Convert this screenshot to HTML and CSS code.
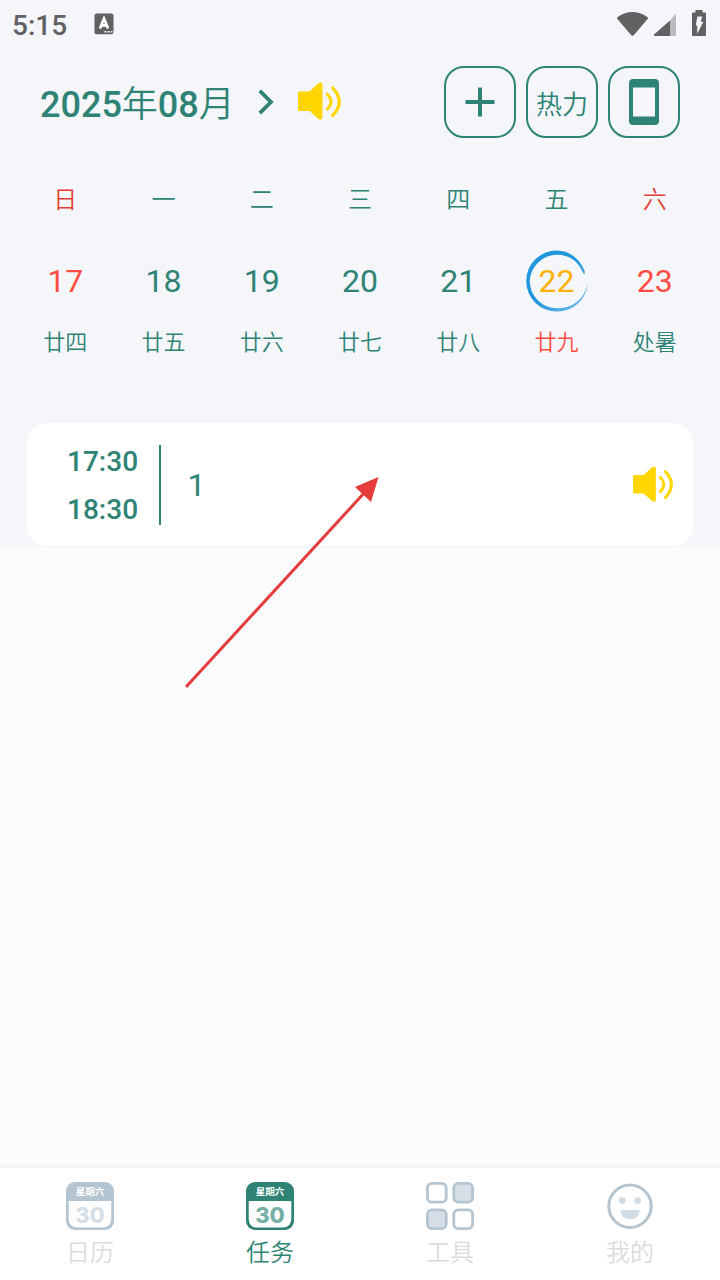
FILE: index.html
```html
<!DOCTYPE html>
<html lang="zh-CN">
<head>
<meta charset="utf-8">
<title>任务</title>
<link rel="stylesheet" href="styles.css">
</head>
<body>
<svg class="defs" width="0" height="0">
  <symbol id="speaker" viewBox="0 0 44 42">
    <path d="M1.5 11.5H11.5L20.5 3.3Q24.5 1.2 24.5 5V37Q24.5 41 20.5 38.9L11.5 31H1.5Q0 31 0 29.5V13Q0 11.5 1.5 11.5Z" fill="currentColor"/>
    <path d="M29.3 14.2Q36.8 21.6 29.3 29" fill="none" stroke="currentColor" stroke-width="3" stroke-linecap="round"/>
    <path d="M34.8 8Q47.6 21.6 34.8 35.4" fill="none" stroke="currentColor" stroke-width="3.2" stroke-linecap="round"/>
  </symbol>
  <symbol id="calendar" viewBox="0 0 48 48">
    <rect width="48" height="48" rx="9" fill="currentColor"/>
    <path d="M2.7 19H45.3V36.5Q45.3 45.6 36.5 45.6H11.5Q2.7 45.6 2.7 36.5Z" fill="#fff"/>
  </symbol>
</svg>
<div class="screen">
  <div class="top">
    <div class="status">
      <span class="clock">5:15</span>
      <svg class="keyboard" width="20" height="22" viewBox="0 0 20 22">
        <rect x=".5" y=".6" width="19" height="20.6" rx="2" fill="#616163"/>
        <path d="M6 15.5L10 5.5L14 15.5M7.4 12.4H12.6" fill="none" stroke="#fff" stroke-width="2.6"/>
        <path d="M10.5 18.8h2M13.7 18.8h2M16.9 18.8h1.6" stroke="#fff" stroke-width="1.6"/>
      </svg>
      <svg class="signals" width="92" height="28" viewBox="0 0 92 28">
        <path d="M2.4 7.2Q17.5-3 32.6 7.2Q33.6 8 32.6 9L18.7 25.3Q17.5 26.3 16.3 25.3L2.4 9Q1.4 8 2.4 7.2Z" fill="#616163"/>
        <path d="M55 10.5V26H39.7Q38.3 25.6 39.3 24.3Z" fill="#616163"/>
        <path d="M55 10.5L60 4.6Q61 3.8 61 5V25Q61 26 60 26H55Z" fill="#bababd"/>
        <path d="M81 0H87Q87.6 0 87.6 .7V2.6H90Q91 2.6 91 3.6V25Q91 26 90 26H78Q77 26 77 25V3.6Q77 2.6 78 2.6H80.4V.7Q80.4 0 81 0Z" fill="#616163"/>
        <path d="M82.4 6.4H87.2L85.8 11.8H88.4L82.2 23.8V15.5H80.7Z" fill="#f4f6fa"/>
      </svg>
    </div>
    <div class="header">
      <div class="month">2025<span>年</span>08<span>月</span></div>
      <svg class="chevron" width="16" height="26" viewBox="0 0 16 26"><path d="M1.8 1.8L13 13L1.8 24.2" fill="none" stroke="currentColor" stroke-width="3.8"/></svg>
      <svg class="sound" width="44" height="42"><use href="#speaker"/></svg>
      <div class="actions">
        <div class="action"><svg width="30" height="30" viewBox="0 0 30 30"><path d="M15 .5V29.5M.5 15H29.5" stroke="currentColor" stroke-width="4"/></svg></div>
        <div class="action">热力</div>
        <div class="action"><svg width="30" height="46" viewBox="0 0 30 46"><path fill="currentColor" fill-rule="evenodd" d="M4 0H26Q30 0 30 4V42Q30 46 26 46H4Q0 46 0 42V4Q0 0 4 0ZM4 8.5V37.5H26V8.5Z"/></svg></div>
      </div>
    </div>
    <div class="week">
      <div class="day"><span class="name rest">日</span><span class="num off">17</span><span class="lunar">廿四</span></div>
      <div class="day"><span class="name">一</span><span class="num">18</span><span class="lunar">廿五</span></div>
      <div class="day"><span class="name">二</span><span class="num">19</span><span class="lunar">廿六</span></div>
      <div class="day"><span class="name">三</span><span class="num">20</span><span class="lunar">廿七</span></div>
      <div class="day"><span class="name">四</span><span class="num">21</span><span class="lunar">廿八</span></div>
      <div class="day"><span class="name">五</span><span class="num today">22
        <svg class="ring" width="64" height="64" viewBox="0 0 64 64">
          <defs><linearGradient id="fade" x1="0" y1="0" x2="1" y2="1"><stop offset=".5" stop-color="#2196dc"/><stop offset="1" stop-color="#7cc0ea"/></linearGradient></defs>
          <path d="M59.3 25.5Q60.5 22 58.5 19.5A29.5 29.5 0 0 0 32 1.6A30.4 30.4 0 0 0 1.2 32A30.6 30.6 0 0 0 32 62.6A30.5 30.5 0 0 0 62.7 34A29.5 29.5 0 0 1 32 59.3A27.5 27.5 0 0 1 4.7 32A27.5 27.5 0 0 1 32 5.8C44 5.8 53 12 57.3 22.5Z" fill="url(#fade)"/>
        </svg></span><span class="lunar off">廿九</span></div>
      <div class="day"><span class="name rest">六</span><span class="num off">23</span><span class="lunar">处暑</span></div>
    </div>
    <div class="task">
      <div class="times"><span>17:30</span><span>18:30</span></div>
      <div class="title">1</div>
      <svg class="task-sound" width="41" height="40" viewBox="0 0 44 42" preserveAspectRatio="none"><use href="#speaker" width="44" height="42"/></svg>
    </div>
  </div>
  <div class="blank"></div>
  <div class="nav">
    <div class="tab">
      <div class="cal"><svg width="48" height="48"><use href="#calendar"/></svg><span class="cal-week">星期六</span><span class="cal-num">30</span></div>
      <span>日历</span>
    </div>
    <div class="tab active">
      <div class="cal"><svg width="48" height="48"><use href="#calendar"/></svg><span class="cal-week">星期六</span><span class="cal-num">30</span></div>
      <span>任务</span>
    </div>
    <div class="tab">
      <svg width="48" height="48" viewBox="0 0 48 48" stroke="#b4c5d1" stroke-width="2.8">
        <rect x="1.4" y="1.4" width="18.8" height="18.8" rx="4.5" fill="#fff"/>
        <rect x="27.8" y="1.4" width="18.8" height="18.8" rx="4.5" fill="#d5dee6"/>
        <rect x="1.4" y="27.8" width="18.8" height="18.8" rx="4.5" fill="#d5dee6"/>
        <rect x="27.8" y="27.8" width="18.8" height="18.8" rx="4.5" fill="#fff"/>
      </svg>
      <span>工具</span>
    </div>
    <div class="tab">
      <svg width="48" height="48" viewBox="0 0 48 48">
        <circle cx="24" cy="24.3" r="21.2" fill="none" stroke="#b4c5d1" stroke-width="3"/>
        <g fill="#d0dbe3"><circle cx="16.3" cy="18.6" r="3.4"/><circle cx="31.7" cy="18.6" r="3.4"/><path d="M14.2 28H33.8Q33 37.3 24 37.3T14.2 28Z"/></g>
      </svg>
      <span>我的</span>
    </div>
  </div>
  <svg class="arrow" width="200" height="220" viewBox="0 0 200 220">
    <path d="M6 217L186 21" stroke="#e53c3c" stroke-width="3"/>
    <path d="M198.5 7L175 17L191 32Z" fill="#e53c3c"/>
  </svg>
</div>
</body>
</html>
```
FILE: styles.css
```css
body { margin: 0; font-family: Roboto, "Noto Sans CJK SC", sans-serif; color: #2e8374; }
.defs { position: absolute; }
svg { display: block; flex: none; }
.screen { position: relative; width: 720px; height: 1280px; display: flex; flex-direction: column; overflow: hidden; background: #fafbfd; }
.top { height: 547px; flex: none; background: #f4f6fa; }
.status { display: flex; align-items: flex-start; height: 48px; box-sizing: border-box; padding: 10px 0 0 12px; color: #616163; }
.clock { font-size: 28px; font-weight: 480; line-height: 32px; }
.keyboard { margin: 3px 0 0 26.5px; }
.signals { margin-left: auto; margin-right: 13px; }
.header { display: flex; align-items: center; height: 108px; padding: 0 40px; }
.month { padding-top: 6px; font-size: 36px; font-weight: 500; line-height: 52px; white-space: nowrap; }
.month span { font-weight: 350; }
.chevron { margin-left: 23px; }
.sound { margin-left: 24px; margin-bottom: 2px; }
.sound, .task-sound { color: #ffd600; }
.actions { display: flex; gap: 10px; margin-left: auto; }
.action { width: 72px; height: 72px; box-sizing: border-box; border: 2px solid #2e8374; border-radius: 20px; display: flex; align-items: center; justify-content: center; font-size: 26px; font-weight: 350; white-space: nowrap; }
.week { display: grid; grid-template-columns: repeat(7, 1fr); padding: 25px 16px 0; height: 218px; }
.day { display: flex; flex-direction: column; align-items: center; }
.name { font-size: 24px; font-weight: 350; line-height: 38px; }
.num { font-size: 32px; line-height: 38px; margin-top: 43px; }
.lunar { font-size: 22px; font-weight: 350; line-height: 34px; margin-top: 26px; }
.rest { color: #e43d33; }
.off { color: #ff4d43; }
.today { position: relative; color: #ffb000; }
.ring { position: absolute; left: -14px; top: -13px; }
.task { display: flex; align-items: center; width: 666px; height: 123.5px; margin: 23.5px auto 0; background: #fff; border-radius: 20px; }
.times { display: flex; flex-direction: column; justify-content: center; margin: 1px 0 0 40px; width: 91.5px; height: 80px; border-right: 2px solid #2e8374; font-size: 28px; font-weight: 500; line-height: 48px; }
.times span { padding-top: 1px; margin-bottom: -1px; }
.title { padding-top: 2px; font-size: 32px; margin-left: 27px; }
.task-sound { margin-left: auto; margin-right: 19px; }
.blank { flex: 1; }
.nav { display: grid; grid-template-columns: repeat(4, 1fr); height: 112px; background: #fff; box-shadow: 0 -1px 5px rgba(0, 0, 0, .07); }
.tab { display: flex; flex-direction: column; align-items: center; padding-top: 14px; font-size: 24px; font-weight: 350; line-height: 46px; color: #dcdcdc; }
.active { color: #2e8374; }
.cal { position: relative; width: 48px; height: 48px; color: #b4c5d1; text-align: center; }
.active .cal { color: #2e8374; }
.cal-week { position: absolute; left: 0; top: 3px; width: 48px; font-size: 9.5px; font-weight: 700; line-height: 14px; color: #fff; }
.cal-num { position: absolute; left: 0; top: 20px; width: 48px; font-family: Inter, sans-serif; font-size: 22px; font-weight: 800; line-height: 26px; color: #d5dee6; }
.active .cal-num { color: #74b0a5; }
.arrow { position: absolute; left: 180px; top: 470px; }
```
